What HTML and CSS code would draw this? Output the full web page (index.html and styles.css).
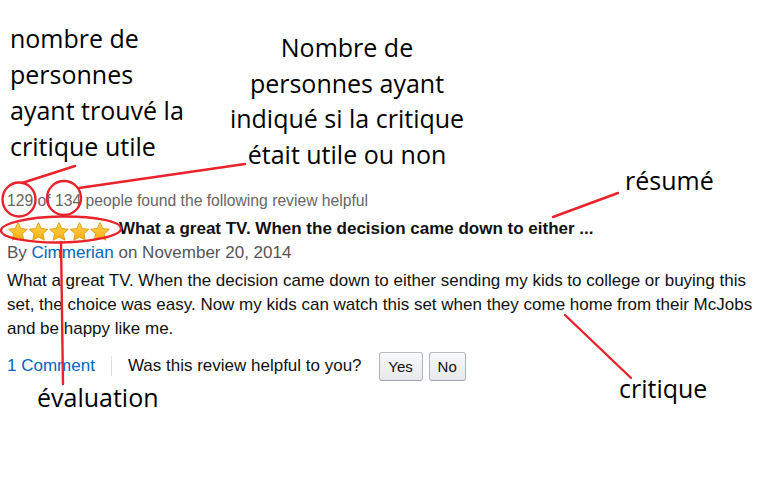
FILE: index.html
```html
<!DOCTYPE html>
<html lang="fr">
<head>
<meta charset="utf-8">
<title>Critique annotée</title>
<link rel="stylesheet" href="styles.css">
</head>
<body>
<div class="canvas">
  <div class="review">
    <div class="helpful-count">129 of 134 people found the following review helpful</div>
    <div class="title-row">
      <span class="stars">
        <svg width="104" height="22" viewBox="0 0 104 22" aria-hidden="true">
          <defs>
            <linearGradient id="sg" x1="0" y1="0" x2="0" y2="1">
              <stop offset="0" stop-color="#ffd452"/>
              <stop offset="1" stop-color="#f7ae0c"/>
            </linearGradient>
            <path id="star" d="M10 1l2.75 6.05 6.6.7-4.95 4.45 1.4 6.5L10 15.4 4.2 18.7l1.4-6.5L.65 7.75l6.6-.7z"/>
          </defs>
          <g fill="url(#sg)" stroke="#e09a10" stroke-width="0.9" stroke-linejoin="round">
            <use href="#star" x="1" y="1.5"/>
            <use href="#star" x="21.5" y="1.5"/>
            <use href="#star" x="42" y="1.5"/>
            <use href="#star" x="62.5" y="1.5"/>
            <use href="#star" x="83" y="1.5"/>
          </g>
        </svg>
      </span>
      <span class="title">What a great TV. When the decision came down to either ...</span>
    </div>
    <div class="byline">By <a class="link" href="#">Cimmerian</a> on November 20, 2014</div>
    <p class="body">What a great TV. When the decision came down to either sending my kids to college or buying this set, the choice was easy. Now my kids can watch this set when they come home from their McJobs and be happy like me.</p>
    <div class="actions">
      <a class="link" href="#">1 Comment</a>
      <span class="sep"></span>
      <span class="question">Was this review helpful to you?</span>
      <button class="btn btn-yes">Yes</button>
      <button class="btn btn-no">No</button>
    </div>
  </div>

  <div class="note note-useful">nombre de<br>personnes<br>ayant trouvé la<br>critique utile</div>
  <div class="note note-total">Nombre de<br>personnes ayant<br>indiqué si la critique<br>était utile ou non</div>
  <div class="note note-summary">résumé</div>
  <div class="note note-rating">évaluation</div>
  <div class="note note-review">critique</div>

  <svg class="marks" width="768" height="483" viewBox="0 0 768 483" aria-hidden="true">
    <g fill="none" stroke="#e8232b" stroke-width="2.4" stroke-linecap="round">
      <ellipse cx="19" cy="199.5" rx="16.5" ry="17"/>
      <ellipse cx="64" cy="198" rx="17" ry="17"/>
      <ellipse cx="61" cy="229.5" rx="60" ry="13" transform="rotate(-1 61 229.5)"/>
      <line x1="22" y1="183" x2="75" y2="166"/>
      <line x1="79" y1="188" x2="245" y2="164"/>
      <line x1="61" y1="242" x2="63" y2="384"/>
      <line x1="553" y1="217" x2="618" y2="193"/>
      <line x1="565" y1="315" x2="631" y2="378"/>
    </g>
  </svg>
</div>
</body>
</html>
```

FILE: styles.css
```css
html, body {
  margin: 0;
  padding: 0;
  background: #ffffff;
}

.canvas {
  position: relative;
  width: 768px;
  height: 483px;
  overflow: hidden;
  font-family: "Liberation Sans", Arial, sans-serif;
  color: #111111;
}

.review {
  padding: 191px 0 0 7px;
  display: flex;
  flex-direction: column;
}

.helpful-count {
  font-size: 15.7px;
  line-height: 20px;
  color: #666666;
  height: 20px;
}

.title-row {
  margin-top: 6px;
  display: flex;
  align-items: center;
  gap: 8px;
  height: 24px;
}

.stars {
  display: flex;
  margin-left: 0;
  margin-top: 3px;
}

.title {
  font-weight: bold;
  font-size: 17px;
  color: #111111;
}

.byline {
  margin-top: 1px;
  font-size: 17px;
  line-height: 22px;
  color: #555555;
}

.link {
  color: #0066c0;
  text-decoration: none;
}

.body {
  margin: 5px 0 0 0;
  font-size: 17px;
  line-height: 24px;
  color: #111111;
  width: 758px;
}

.actions {
  margin-top: 10px;
  display: flex;
  align-items: center;
  height: 30px;
  font-size: 17px;
}

.sep {
  width: 1px;
  height: 20px;
  background: #dddddd;
  margin: 0 16px 0 16px;
}

.question {
  color: #111111;
  margin-right: 17px;
}

.btn {
  font-family: "Liberation Sans", Arial, sans-serif;
  font-size: 15px;
  color: #111111;
  height: 29px;
  padding: 0 8px;
  border: 1px solid #adb1b8;
  border-color: #b8bbc1 #adb1b8 #a2a6ac;
  border-radius: 3px;
  background: linear-gradient(to bottom, #f7f8fa, #e7e9ec);
  box-shadow: inset 0 1px 0 rgba(255,255,255,0.6);
}

.btn-yes {
  width: 44px;
  margin-right: 6px;
}

.btn-no {
  width: 37px;
}

.note {
  position: absolute;
  font-family: "Open Sans", "Noto Sans", sans-serif;
  font-size: 25px;
  line-height: 36px;
  color: #000000;
  white-space: nowrap;
}

.note-useful {
  left: 10px;
  top: 20px;
}

.note-total {
  left: 207px;
  width: 280px;
  top: 30px;
  text-align: center;
  line-height: 35.7px;
}

.note-summary {
  left: 625px;
  top: 162px;
}

.note-rating {
  left: 37px;
  top: 379px;
}

.note-review {
  left: 619px;
  top: 370px;
}

.marks {
  position: absolute;
  left: 0;
  top: 0;
  pointer-events: none;
}
```
